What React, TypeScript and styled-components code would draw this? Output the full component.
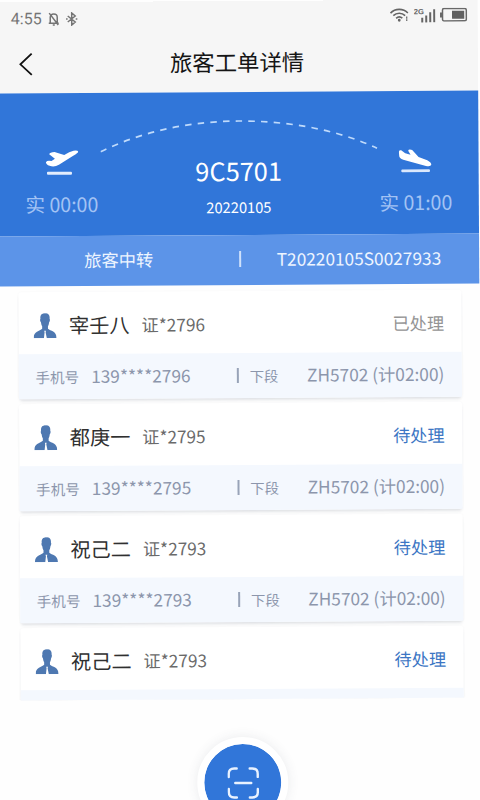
import React from "react";
import styled, { createGlobalStyle } from "styled-components";

const GlobalStyle = createGlobalStyle`
  * { box-sizing: border-box; }
  html, body { margin: 0; background: #fefefe; }
  body { overflow: hidden; }
`;

const Viewport = styled.div`
  width: 480px;
  height: 800px;
  overflow: hidden;
  background: #fefefe;
  font-family: "Noto Sans CJK SC", "Noto Sans", sans-serif;
`;

const Screen = styled.div`
  width: 480px;
  height: 806px;
  display: flex;
  flex-direction: column;
  transform: rotate(-0.34deg);
  transform-origin: 240px 400px;
`;

const Header = styled.header`
  height: 92px;
  flex: none;
  padding-top: 1px;
  background: #f6f6f6;
  background-clip: content-box;
`;

const StatusBar = styled.div`
  height: 34px;
  padding: 0 10px 0 13px;
  display: flex;
  justify-content: space-between;
  color: #757575;
`;

const StatusGroup = styled.div<{ $gap: number; $top: number }>`
  display: flex;
  align-items: center;
  height: 22px;
  margin-top: ${(p) => p.$top}px;
  gap: ${(p) => p.$gap}px;
`;

const Clock = styled.span`
  font: 16px/22px Roboto, sans-serif;
  padding-top: 1px;
`;

const NavBar = styled.div`
  height: 57px;
  display: grid;
  grid-template-columns: 60px 1fr 60px;
  align-items: center;
`;

const BackButton = styled.button`
  border: 0;
  padding: 0 0 2px 21px;
  background: none;
  display: flex;
`;

const Title = styled.h1`
  margin: 0 2px 5px 0;
  text-align: center;
  font-size: 22.4px;
  line-height: 32px;
  font-weight: 400;
  color: #151515;
`;

const Hero = styled.section`
  height: 142.5px;
  flex: none;
  display: grid;
  grid-template-columns: 126px 1fr 126px;
  grid-template-rows: 142.5px;
  background: #3176d9;
  color: #fff;
`;

const Arc = styled.svg`
  grid-area: 1 / 1 / 2 / 4;
  width: 278px;
  height: 34px;
  margin: 26.5px 0 0 102px;
`;

const Station = styled.div<{ $column: number }>`
  grid-area: 1 / ${(p) => p.$column};
  display: flex;
  flex-direction: column;
  align-items: center;
  padding-top: 55.5px;
`;

const StationTime = styled.span`
  margin-top: 13px;
  font-size: 19.6px;
  line-height: 28px;
  color: #a3c3f4;
  white-space: nowrap;
`;

const FlightInfo = styled.div`
  grid-area: 1 / 2;
  display: flex;
  flex-direction: column;
  align-items: center;
  padding-top: 59.5px;
`;

const FlightNumber = styled.span`
  font-size: 25.4px;
  line-height: 36px;
`;

const FlightDate = styled.span`
  margin-top: 8px;
  font-size: 14.7px;
  line-height: 22px;
`;

const OrderStrip = styled.section`
  height: 50.5px;
  flex: none;
  display: grid;
  grid-template-columns: 240px 1fr;
  align-items: center;
  padding-bottom: 2.5px;
  background: #5c94e8;
  color: #eef5ff;
  font-size: 17.3px;
  line-height: 26px;
`;

const OrderType = styled.span`
  padding-left: 85px;
`;

const OrderNumber = styled.span`
  display: flex;
  align-items: center;
  gap: 36px;
`;

const Bar = styled.i<{ $height: number; $color: string }>`
  width: 1.5px;
  height: ${(p) => p.$height}px;
  background: ${(p) => p.$color};
`;

const List = styled.main`
  height: 414px;
  flex: none;
  padding: 6px 18.5px 0;
  overflow: hidden;
  display: flex;
  flex-direction: column;
  gap: 5px;
`;

const Card = styled.article`
  flex: none;
  border-radius: 3px;
  background: #fff;
  box-shadow: 0 3px 3px -1px rgba(60, 70, 90, 0.14), 0 0 3px rgba(60, 70, 90, 0.03);
`;

const CardHead = styled.div`
  height: 61.5px;
  display: flex;
  align-items: center;
  padding: 5px 16.5px 0 15.5px;
`;

const Name = styled.span`
  margin-left: 12.5px;
  width: 72.5px;
  font-size: 20.2px;
  line-height: 30px;
  color: #303030;
`;

const IdText = styled.span`
  font-size: 17.2px;
  line-height: 26px;
  color: #6a6a6a;
`;

const Status = styled.span<{ $done: boolean }>`
  margin-left: auto;
  padding-right: 0.5px;
  font-size: 17.2px;
  line-height: 26px;
  color: ${(p) => (p.$done ? "#949494" : "#3c76c4")};
`;

const CardDetail = styled.div`
  height: 45.5px;
  display: flex;
  align-items: center;
  padding: 0 17px 0.5px 17px;
  background: #f4f8fe;
  color: #8c96ac;
  font-size: 17.3px;
  line-height: 26px;
  white-space: nowrap;
`;

const CardDetailEdge = styled.div`
  height: 11px;
  background: #f4f8fe;
`;

const Label = styled.span`
  padding-top: 2px;
  font-size: 14.6px;
`;

const Phone = styled.span`
  margin-left: 12px;
  width: 146px;
`;

const Segment = styled.span`
  margin-left: 11px;
  padding-top: 2px;
  font-size: 14.4px;
`;

const NextFlight = styled.span`
  margin-left: auto;
`;

const Footer = styled.footer`
  height: 107px;
  flex: none;
  display: flex;
  justify-content: center;
  align-items: flex-start;
  padding: 38px 0 0 1px;
`;

const ScanButton = styled.button`
  width: 91px;
  height: 91px;
  flex: none;
  border: 7px solid #fff;
  border-radius: 50%;
  padding: 0;
  background: #3176d9;
  background-clip: padding-box;
  box-shadow: 0 0 12px rgba(60, 70, 90, 0.1);
  display: flex;
  align-items: center;
  justify-content: center;
`;

const MutedBell = () => (
  <svg width="12" height="14" viewBox="0 0 12 14" fill="none" stroke="#757575" strokeWidth="1.5">
    <path d="M2.5 11V5.2C2.5 3.2 3.8 2 6 2s3.500 1.200 3.500 3.200V11M1 11.200h10M5 13h2M1.500 1l9 12" />
  </svg>
);

const Bluetooth = () => (
  <svg width="12" height="14" viewBox="0 0 12 14" fill="none" stroke="#757575" strokeWidth="1.5">
    <path d="M2 4l7.500 6L6 13V1l3.500 3L2 10M.3 7h1.600M10 7h1.700" />
  </svg>
);

const Wifi = () => (
  <svg width="19" height="14" viewBox="0 0 19 14" fill="none" stroke="#656565" strokeWidth="1.7">
    <path d="M.8 5C5.5.2 13.5.2 18.2 5M3.600 7.600c3.300-3.200 8.500-3.200 11.800 0M6.400 10.200c1.800-1.600 4.400-1.600 6.200 0" />
    <circle cx="9.5" cy="12.2" r="1.4" fill="#656565" stroke="none" />
    <path d="M17 8.500v4.500" strokeWidth="1.2" strokeDasharray="2.200 .5" />
  </svg>
);

const Signal = () => (
  <svg width="22" height="15" viewBox="0 0 22 15" fill="#656565">
    <text x="0" y="6.3" fontSize="7.6" fontWeight="700" fontFamily="Liberation Sans, sans-serif">2G</text>
    <path d="M7.500 9.800h2V14.500h-2zM11.500 7.500h2v7h-2zM15.500 4.500h2v10h-2zM19.500 1.500h2v13h-2z" />
  </svg>
);

const Battery = () => (
  <svg width="28" height="14" viewBox="0 0 28 14">
    <rect x="2.8" y=".8" width="23.800" height="12.400" rx="1.5" fill="none" stroke="#686868" strokeWidth="1.5" />
    <path d="M.3 4.600h2v5H.3z" fill="#686868" />
    <path d="M12.300 3h12.200v8h-12.200z" fill="#606060" />
  </svg>
);

const BackArrow = () => (
  <svg width="14" height="24" viewBox="0 0 14 24" fill="none" stroke="#111" strokeWidth="1.8">
    <path d="M12.700 1.300L1.400 12l11.300 10.700" />
  </svg>
);

const TakeOff = () => (
  <svg width="34" height="28" viewBox="135 176 102 84" fill="#fff">
    <path d="M149 191Q151 186 165 185L194 194Q210 184 222 181Q235 179 236 184Q236 189 221 196L178 223Q164 231 150 226Q139 222 139 215Q143 209 156 212L166 205Z" />
    <rect x="142" y="244" width="75" height="9" rx="3" fill="#e3edfd" />
  </svg>
);

const Landing = () => (
  <svg width="34" height="28" viewBox="474 170 102 84" fill="#fff">
    <path d="M475 184Q476 179 482 180L494 189L510 193L503 181Q504 176 515 179L534 200L560 210Q573 217 572 224Q570 230 556 227L488 208Q476 204 476 197Z" />
    <rect x="482" y="237.500" width="86" height="8" rx="3" fill="#dbe8fc" />
  </svg>
);

const Person = () => (
  <svg width="23" height="25" viewBox="0 0 23 25" fill="#4e78b1">
    <path d="M11.500 0C8 0 6.500 2 6.900 5.500C6.300 6.500 6.600 8.300 7.400 9C7.700 11 8 12.200 8.600 13V15.500C6.200 18 0 17.500 0 25H10.300L11 19L10.600 17.500H12.400L12 19L13.200 25H23C23 17.500 16.800 18 14.400 15.500V13C15 12.200 15.300 11 15.600 9C16.400 8.300 16.700 6.500 16.100 5.500C16.500 2 15 0 11.500 0Z" />
  </svg>
);

const ScanIcon = () => (
  <svg width="32" height="32" viewBox="0 0 32 32" fill="none" stroke="#e9f2ff" strokeWidth="2.4" strokeLinecap="round">
    <path d="M1.500 10V7Q1.500 1.500 7 1.500H9.500M22.500 1.500H25Q30.500 1.500 30.500 7V10M30.500 22V25Q30.500 30.500 25 30.500H22.500M9.500 30.500H7Q1.500 30.500 1.500 25V22M8 16H24" />
  </svg>
);

const passengers = [
  { name: "宰壬八", code: "2796", done: true, open: true },
  { name: "都庚一", code: "2795", done: false, open: true },
  { name: "祝己二", code: "2793", done: false, open: true },
  { name: "祝己二", code: "2793", done: false, open: false },
];

export default function App() {
  return (
    <Viewport>
      <GlobalStyle />
      <Screen>
        <Header>
          <StatusBar>
            <StatusGroup $gap={6} $top={5.5}>
              <Clock>4:55</Clock>
              <MutedBell />
              <Bluetooth />
            </StatusGroup>
            <StatusGroup $gap={4.5} $top={4}>
              <Wifi />
              <Signal />
              <Battery />
            </StatusGroup>
          </StatusBar>
          <NavBar>
            <BackButton aria-label="返回"><BackArrow /></BackButton>
            <Title>旅客工单详情</Title>
          </NavBar>
        </Header>
        <Hero>
          <Arc viewBox="0 0 278 34" fill="none" stroke="#bfdafb" strokeWidth="1.7" strokeDasharray="6.500 6.200">
            <path d="M0 32C45 10 95 2 138 2S232 9 276.500 30" />
          </Arc>
          <Station $column={1}>
            <TakeOff />
            <StationTime>实 00:00</StationTime>
          </Station>
          <FlightInfo>
            <FlightNumber>9C5701</FlightNumber>
            <FlightDate>20220105</FlightDate>
          </FlightInfo>
          <Station $column={3}>
            <Landing />
            <StationTime>实 01:00</StationTime>
          </Station>
        </Hero>
        <OrderStrip>
          <OrderType>旅客中转</OrderType>
          <OrderNumber>
            <Bar $height={16} $color="#cfe1fb" />
            T20220105S0027933
          </OrderNumber>
        </OrderStrip>
        <List>
          {passengers.map((p, i) => (
            <Card key={i}>
              <CardHead>
                <Person />
                <Name>{p.name}</Name>
                <IdText>证*{p.code}</IdText>
                <Status $done={p.done}>{p.done ? "已处理" : "待处理"}</Status>
              </CardHead>
              {p.open ? (
                <CardDetail>
                  <Label>手机号</Label>
                  <Phone>139****{p.code}</Phone>
                  <Bar $height={15} $color="#98a3b8" />
                  <Segment>下段</Segment>
                  <NextFlight>ZH5702 (计02:00)</NextFlight>
                </CardDetail>
              ) : (
                <CardDetailEdge />
              )}
            </Card>
          ))}
        </List>
        <Footer>
          <ScanButton aria-label="扫描"><ScanIcon /></ScanButton>
        </Footer>
      </Screen>
    </Viewport>
  );
}
